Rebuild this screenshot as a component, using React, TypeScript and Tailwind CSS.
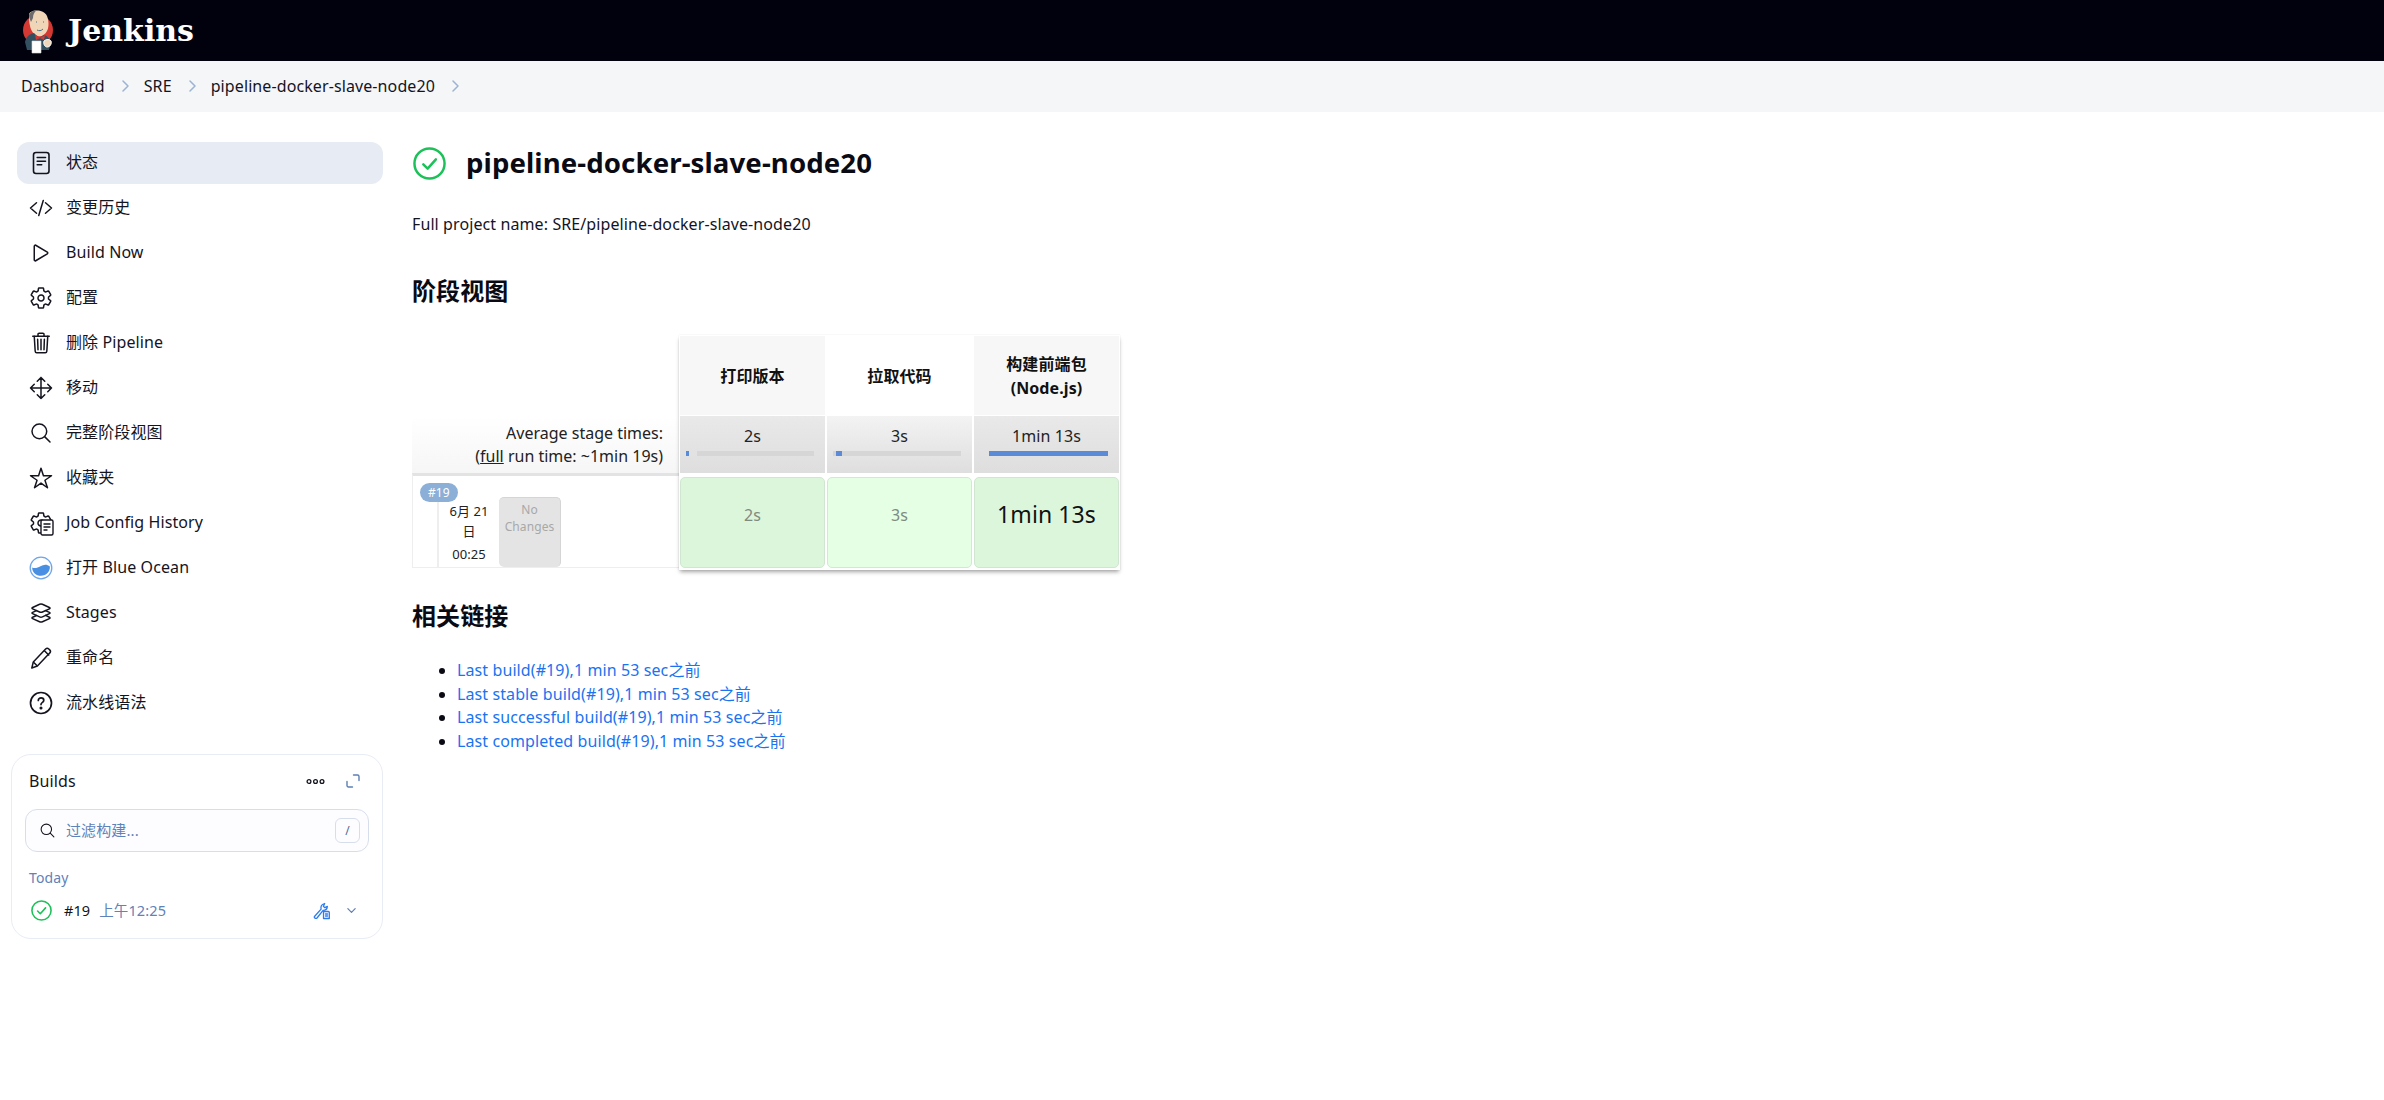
import type { ReactElement, ReactNode } from "react";
import {
  IoChevronDown,
  IoCodeSlashOutline,
  IoLayersOutline,
  IoMoveOutline,
  IoPlayOutline,
  IoSearchOutline,
  IoSettingsOutline,
  IoStarOutline,
  IoTrashOutline,
} from "react-icons/io5";

// ── small drawings ────────────────────────────────────────────────────────────

function JenkinsLogo(): ReactElement {
  return (
    <svg width="34" height="46" viewBox="0 0 34 46" className="shrink-0">
      <circle cx="17" cy="22" r="15" fill="#d33833" />
      <path d="M8 7c0-5 14-7 18 1 2 5 2 11 0 15-2 4-6 6-9 5-4-1-7-5-8-10-1-4-1-8-1-11z" fill="#f0d6b7" />
      <path d="M8 7c1-3 5-5 8-5-3 2-4 5-4 8l-2 4c-1-2-2-5-2-7z" fill="#6d6b6d" />
      <path d="M4 34c1-5 4-8 9-9l5 5 5-3c4 1 6 4 7 8l-2 7H6z" fill="#335061" />
      <path d="M14 27l5 3 5-3-1 5-4-2-4 2z" fill="#d33833" />
      <path d="M11 33h9v12h-9z" fill="#fff" stroke="#d9d9d9" strokeWidth="0.6" />
      <path d="M23 33c2-2 6-2 7 0 1 3-1 6-4 6-2 0-4-3-3-6z" fill="#f0d6b7" stroke="#fff" strokeWidth="1" />
      <path d="M15 14h1M22 14h1M16 22c2 1 4 1 6-1" stroke="#49728b" strokeWidth="1" fill="none" />
    </svg>
  );
}

function NoteIcon(): ReactElement {
  return (
    <svg width="24" height="24" viewBox="0 0 24 24" fill="none" stroke="#14141f" strokeWidth="1.6" strokeLinecap="round">
      <rect x="4.500" y="1.500" width="15.500" height="21" rx="2.500" />
      <path d="M8.200 6.500h8.300M8.200 10.200h8.300M8.200 13.800h4.500" />
    </svg>
  );
}

function PencilIcon(): ReactElement {
  return (
    <svg width="24" height="24" viewBox="0 0 24 24" fill="none" stroke="#14141f" strokeWidth="1.5" strokeLinejoin="round">
      <path d="M2.800 22l1.500-6L16.600 3c.9-.9 2.300-.9 3.200 0l.9.9c.9.9.9 2.300 0 3.200L8.400 20z" />
      <path d="M4.300 16l4.100 4M15.200 4.500l5 5" />
    </svg>
  );
}

function HelpIcon(): ReactElement {
  return (
    <svg width="24" height="24" viewBox="0 0 24 24" fill="none" stroke="#14141f" strokeWidth="1.7" strokeLinecap="round">
      <circle cx="12" cy="12" r="10.500" />
      <path d="M9.300 9.500c0-1.600 1.200-2.600 2.800-2.600s2.700 1 2.700 2.400c0 1.200-.8 1.800-1.600 2.300-.8.5-1.200 1-1.200 2" />
      <circle cx="12" cy="17" r="0.700" fill="#14141f" />
    </svg>
  );
}

function ConfigHistoryIcon(): ReactElement {
  return (
    <span className="relative block h-6 w-6">
      <IoSettingsOutline size={24} color="#14141f" />
      <svg width="15" height="17" viewBox="0 0 15 17" fill="#fff" stroke="#14141f" strokeWidth="1.4" strokeLinecap="round" className="absolute left-[11px] top-[8px]">
        <rect x="1" y="1" width="12" height="15" rx="1.500" />
        <path d="M4 5h6M4 8h6M4 11h3" />
      </svg>
    </span>
  );
}

function BlueOceanIcon(): ReactElement {
  return (
    <svg width="26" height="26" viewBox="0 0 26 26">
      <circle cx="13" cy="13" r="11.700" fill="#fff" stroke="#6ea6e8" strokeWidth="1.400" />
      <path d="M3.400 12.500c3.500 1.400 6 0 9-1.400 3.400-1.700 7-2.400 10.200 0.400 0.400 5.600-4 10-9.600 10-5.400 0-9.600-4-9.600-9z" fill="#4a90e2" />
    </svg>
  );
}

function SuccessIcon({ size }: { size: number }): ReactElement {
  return (
    <svg width={size} height={size} viewBox="0 0 32 32" fill="none" stroke="#1ec05a" strokeLinecap="round" strokeLinejoin="round">
      <circle cx="16" cy="16" r="14.600" strokeWidth="2.400" />
      <path d="M10 16.800l4.200 4.200 8-9" strokeWidth="2.400" />
    </svg>
  );
}

function ExpandIcon(): ReactElement {
  return (
    <svg width="14" height="14" viewBox="0 0 14 14" fill="none" stroke="#5c7fb5" strokeWidth="1.400" strokeLinecap="round" strokeLinejoin="round">
      <path d="M7.500 1h4A1.500 1.500 0 0 1 13 2.500v4M6.500 13h-4A1.500 1.500 0 0 1 1 11.500v-4" />
    </svg>
  );
}

function DotsIcon(): ReactElement {
  return (
    <svg width="19" height="7" viewBox="0 0 19 7" fill="none" stroke="#14141f" strokeWidth="1.300">
      <circle cx="3" cy="3.500" r="1.900" />
      <circle cx="9.500" cy="3.500" r="1.900" />
      <circle cx="16" cy="3.500" r="1.900" />
    </svg>
  );
}

function ToolIcon(): ReactElement {
  return (
    <svg width="18" height="18" viewBox="0 0 18 18" fill="none" stroke="#2b7cf0" strokeWidth="1.300" strokeLinecap="round" strokeLinejoin="round">
      <path d="M1.500 14.500l6.600-7.400c-.5-2 .2-4.600 3.600-5.600l-1.300 2.700 1.300 1.400 2.700-1.200c-.3 2.700-2 4-4.300 4L4 16c-1 1-3.400-.3-2.500-1.500z" />
      <path d="M10.500 9.500h4.800c.5 0 1 .4 1 1v6h-5.800z" fill="#fff" />
      <path d="M12.500 12h2M12.500 14h2" />
    </svg>
  );
}

function CrumbChevron(): ReactElement {
  return (
    <svg width="7" height="12" viewBox="0 0 7 12" fill="none" stroke="#9db3d4" strokeWidth="1.500" strokeLinecap="round" strokeLinejoin="round">
      <path d="M1 1l5 5-5 5" />
    </svg>
  );
}

// ── data ──────────────────────────────────────────────────────────────────────

const NAV: { label: string; icon: ReactNode; active?: boolean }[] = [
  { label: "状态", icon: <NoteIcon />, active: true },
  { label: "变更历史", icon: <IoCodeSlashOutline size={24} color="#14141f" /> },
  { label: "Build Now", icon: <IoPlayOutline size={24} color="#14141f" /> },
  { label: "配置", icon: <IoSettingsOutline size={24} color="#14141f" /> },
  { label: "删除 Pipeline", icon: <IoTrashOutline size={24} color="#14141f" /> },
  { label: "移动", icon: <IoMoveOutline size={24} color="#14141f" /> },
  { label: "完整阶段视图", icon: <IoSearchOutline size={24} color="#14141f" /> },
  { label: "收藏夹", icon: <IoStarOutline size={24} color="#14141f" /> },
  { label: "Job Config History", icon: <ConfigHistoryIcon /> },
  { label: "打开 Blue Ocean", icon: <BlueOceanIcon /> },
  { label: "Stages", icon: <IoLayersOutline size={24} color="#14141f" /> },
  { label: "重命名", icon: <PencilIcon /> },
  { label: "流水线语法", icon: <HelpIcon /> },
];

const CRUMBS = ["Dashboard", "SRE", "pipeline-docker-slave-node20"];

const LINKS = [
  "Last build(#19),1 min 53 sec之前",
  "Last stable build(#19),1 min 53 sec之前",
  "Last successful build(#19),1 min 53 sec之前",
  "Last completed build(#19),1 min 53 sec之前",
];

// ── sections ──────────────────────────────────────────────────────────────────

function Sidebar(): ReactElement {
  return (
    <aside className="flex w-[412px] shrink-0 flex-col pl-[11px] pr-[29px] pt-[30px]">
      <nav className="ml-[6px] flex flex-col gap-[3px]">
        {NAV.map((item) => (
          <div
            key={item.label}
            className={`flex h-[42px] items-center gap-[13px] rounded-[12px] pl-3 text-base text-[#14141f] ${item.active ? "bg-[#e7ebf3]" : ""}`}
          >
            <span className="flex h-6 w-6 items-center justify-center">{item.icon}</span>
            <span className="mb-[2px]">{item.label}</span>
          </div>
        ))}
      </nav>
      <section className="mt-[30px] h-[185px] rounded-[20px] border border-[#e8ecf4] px-[13px] pt-[13px]">
        <div className="flex h-[26px] items-center justify-between pl-[4px] pr-[9px]">
          <span className="text-base text-[#14141f]">Builds</span>
          <div className="flex items-center gap-[21px]">
            <DotsIcon />
            <ExpandIcon />
          </div>
        </div>
        <div className="mt-[15px] flex h-[43px] items-center rounded-[12px] border border-[#d7deeb] bg-[#fdfdff] pl-[13px] pr-[8px]">
          <IoSearchOutline size={17} color="#14141f" />
          <span className="ml-[10px] flex-1 text-[15px] text-[#5f82b8]">过滤构建...</span>
          <span className="flex h-[25px] w-[25px] items-center justify-center rounded-[6px] border border-[#d7deeb] text-xs text-[#4e6a96]">/</span>
        </div>
        <div className="mt-[16px] pl-[4px] text-sm text-[#5f82b8]">Today</div>
        <div className="mt-[12px] flex items-center pl-[6px] pr-[11px] text-[14.5px]">
          <SuccessIcon size={21} />
          <span className="ml-[12px] text-[#14141f]">#19</span>
          <span className="ml-[9px] flex-1 text-[#5f82b8]">上午12:25</span>
          <ToolIcon />
          <span className="ml-[14px]">
            <IoChevronDown size={13} color="#5c7fb5" />
          </span>
        </div>
      </section>
    </aside>
  );
}

function BarCell({ bg, label, children }: { bg: string; label: string; children: ReactNode }): ReactElement {
  return (
    <div className={`flex h-[57px] w-[145px] flex-col items-center bg-gradient-to-b ${bg} to-[#dedede] pt-[8px] text-base text-[#222]`}>
      <span className="leading-[24px]">{label}</span>
      <div className="ml-[6px] mt-[3px] flex h-[5px] w-[128px] self-start bg-[#d6d6d6]">{children}</div>
    </div>
  );
}

function StageView(): ReactElement {
  return (
    <div className="mt-[28px] flex w-[708px] items-start">
      <div className="flex w-[268px] flex-col">
        <div className="h-[81px]" />
        <div className="flex h-[57px] flex-col items-end justify-center bg-gradient-to-b from-white to-[#f6f6f6] pr-[16px] text-base leading-[23px] tracking-normal text-[#222]">
          <span>Average stage times:</span>
          <span>
            (<span className="underline">full</span> run time: ~1min 19s)
          </span>
        </div>
        <div className="flex h-[95px] border-b border-b-[#eeeeee] border-l border-l-[#eeeeee] border-t-[3px] border-t-[#e3e3e3]">
          <div className="relative ml-[24px] mt-[21px] flex w-[62px] flex-col items-center border-l-2 border-[#eeeeee] text-[13px] text-[#222]">
            <span className="absolute -left-[19px] -top-[14px] rounded-full bg-[#8bafd6] px-[8px] text-xs leading-[19px] text-white">#19</span>
            <span className="mt-[4px] leading-[20px]">6月 21</span>
            <span className="leading-[20px]">日</span>
            <span className="mt-[3px] leading-[20px]">00:25</span>
          </div>
          <div className="mt-[21px] w-[62px] rounded-t-[5px] rounded-b-[5px] border-r border-t border-[#d5d5d5] bg-[#e4e4e4] text-center text-xs leading-[17px] text-[#a8a8a8]">
            <div className="pt-[3px]">No</div>
            <div>Changes</div>
          </div>
        </div>
      </div>
      <div className="flex flex-col gap-[1px] bg-white px-px pb-[2px] pt-px shadow-[0_3px_4px_-1px_rgba(0,0,0,0.35),0_0_1px_rgba(0,0,0,0.12)]">
        <div className="flex gap-[2px]">
          <div className="flex h-[79px] w-[145px] items-center justify-center bg-[#f7f7f7] text-base font-bold text-[#111]">打印版本</div>
          <div className="flex h-[79px] w-[145px] items-center justify-center bg-white text-base font-bold text-[#111]">拉取代码</div>
          <div className="flex h-[79px] w-[145px] items-center justify-center bg-[#f7f7f7] text-center text-base font-bold leading-[24px] text-[#111]">
            构建前端包
            <br />
            (Node.js)
          </div>
        </div>
        <div className="flex gap-[2px]">
          <BarCell bg="from-[#e9e9e9]" label="2s">
            <div className="h-full w-[3px] bg-[#5b8bd6]" />
            <div className="h-full w-[8px] bg-[#e2e2e2]" />
          </BarCell>
          <BarCell bg="from-[#f3f3f3]" label="3s">
            <div className="ml-[3px] h-full w-[6px] bg-[#5b8bd6]" />
          </BarCell>
          <BarCell bg="from-[#e9e9e9]" label="1min 13s">
            <div className="h-full w-[9px] bg-[#e2e2e2]" />
            <div className="h-full w-[119px] bg-[#5b8bd6]" />
          </BarCell>
        </div>
        <div className="flex gap-[2px] pt-[3px]">
          <div className="flex h-[91px] w-[145px] items-center justify-center rounded-[5px] border border-[#d0e6d0] bg-[#dcf6dc] pb-[16px] text-base text-[#7f8a7f]">2s</div>
          <div className="flex h-[91px] w-[145px] items-center justify-center rounded-[5px] border border-[#d2e8d2] bg-[#e4ffe4] pb-[16px] text-base text-[#7f8a7f]">3s</div>
          <div className="flex h-[91px] w-[145px] items-center justify-center rounded-[5px] border border-[#d0e6d0] bg-[#dcf6dc] pb-[16px] text-[23px] text-[#111]">1min 13s</div>
        </div>
      </div>
    </div>
  );
}

function Main(): ReactElement {
  return (
    <main className="flex-1 pt-[32px] text-[#14141f]">
      <div className="flex h-[38px] items-center">
        <span className="ml-[1px]">
          <SuccessIcon size={33} />
        </span>
        <h1 className="ml-[20px] text-[27.6px] font-bold text-[#0a0a14]">pipeline-docker-slave-node20</h1>
      </div>
      <p className="mt-[30px] text-base leading-[24px]">Full project name: SRE/pipeline-docker-slave-node20</p>
      <h2 className="mt-[39px] text-2xl font-bold leading-[32px] text-[#0a0a14]">阶段视图</h2>
      <StageView />
      <h2 className="mt-[30px] text-2xl font-bold leading-[32px] text-[#0a0a14]">相关链接</h2>
      <ul className="mt-[27px] list-disc pl-[45px] text-base leading-[23.7px] marker:text-[#0a0a14]">
        {LINKS.map((link) => (
          <li key={link} className="text-[#1a73f0]">
            {link}
          </li>
        ))}
      </ul>
    </main>
  );
}

export default function App(): ReactElement {
  return (
    <div className="min-h-[1100px] bg-white font-['Noto_Sans','Noto_Sans_CJK_SC',sans-serif] tracking-[0.1px]">
      <header className="flex h-[61px] items-center bg-[#01010d] pl-[21px]">
        <JenkinsLogo />
        <span className="ml-[13px] font-['DejaVu_Serif',serif] text-[30px] font-bold leading-none tracking-normal text-white">Jenkins</span>
      </header>
      <div className="flex h-[51px] items-center bg-[#f5f6f8] pb-[1px] pl-[21px] text-base text-[#14141f]">
        {CRUMBS.map((crumb) => (
          <div key={crumb} className="flex items-center">
            <span>{crumb}</span>
            <span className="ml-[17px] mr-[15px]">
              <CrumbChevron />
            </span>
          </div>
        ))}
      </div>
      <div className="flex">
        <Sidebar />
        <Main />
      </div>
    </div>
  );
}
